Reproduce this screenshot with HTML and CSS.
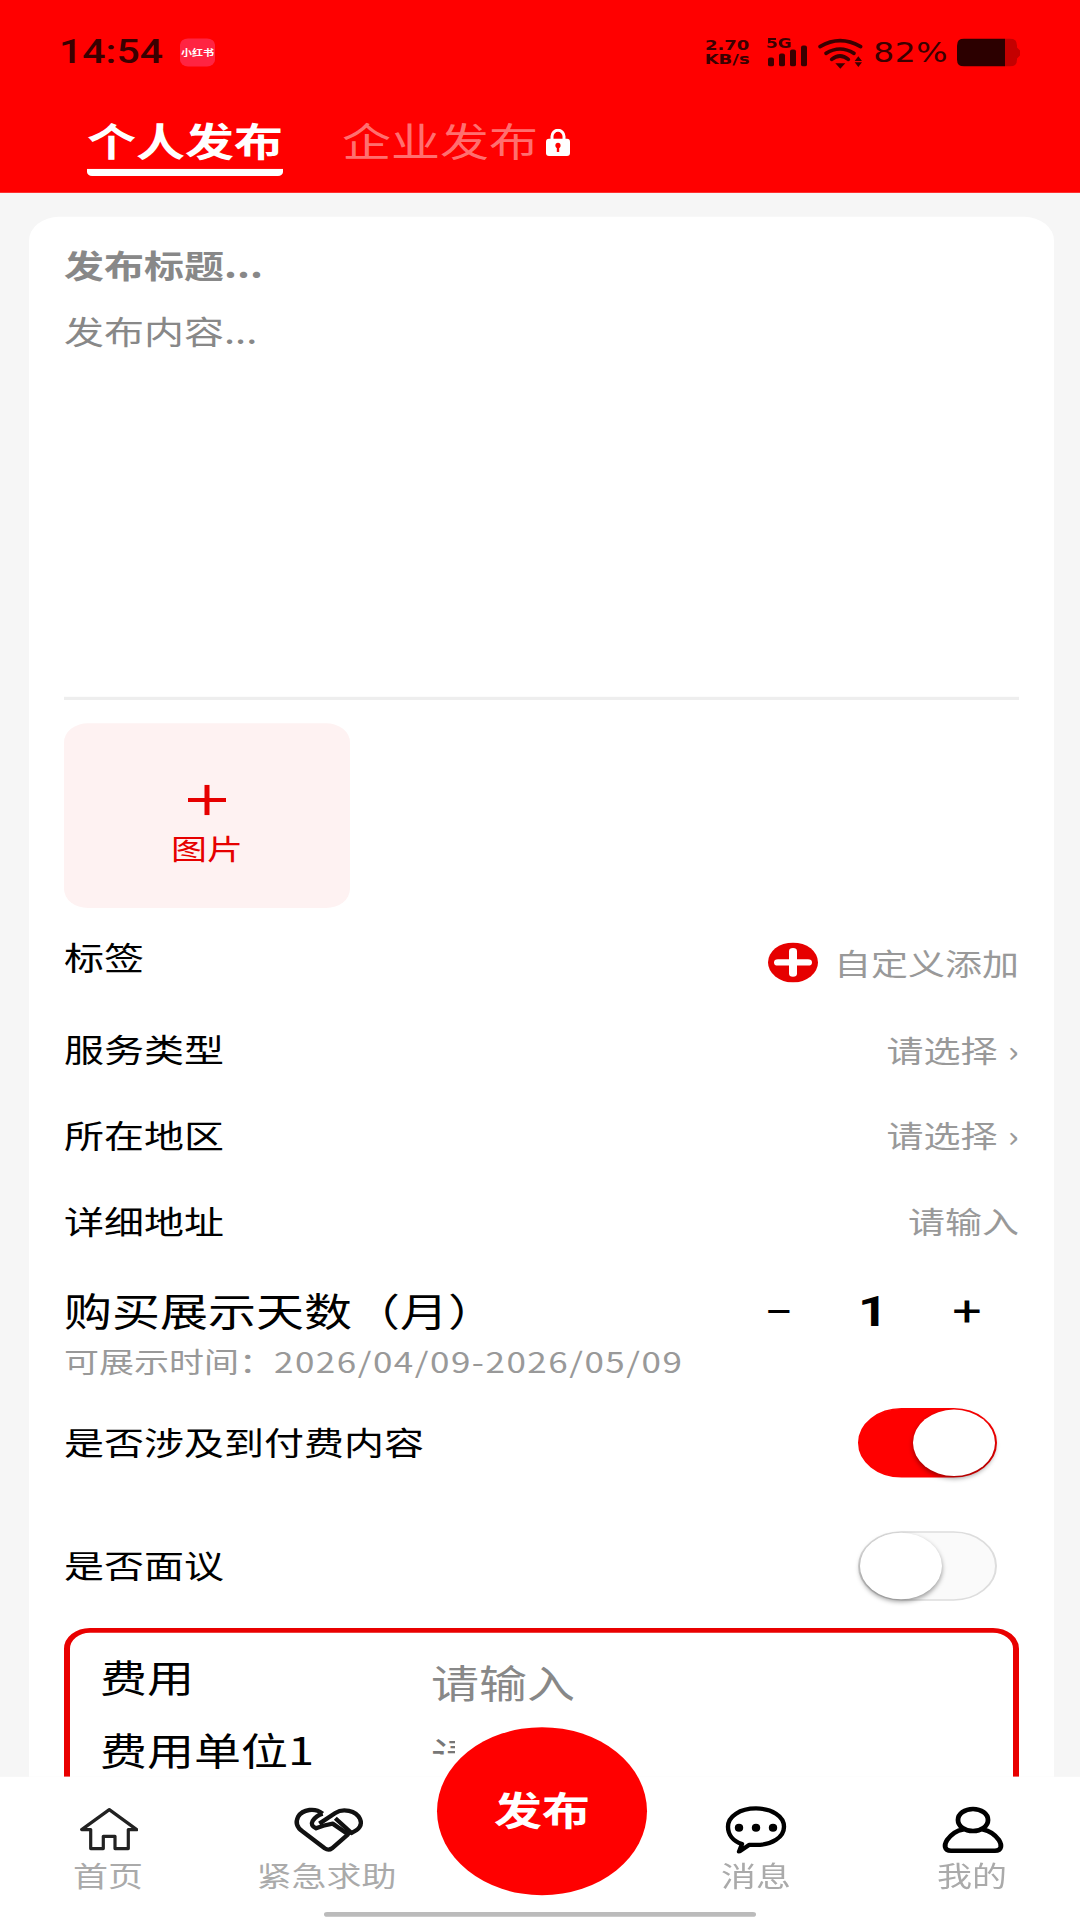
FILE: index.html
```html
<!doctype html>
<html lang="zh-CN">
    <head>
        <meta charset="UTF-8">
        <meta name="viewport" content="width=device-width, initial-scale=1.0">
        <title>发布</title>
        <link rel="stylesheet" href="styles.css">
    </head>
    <body>
        <div class="phone">
            <header class="top">
                <div class="status">
                    <div class="status-left">
                        <span class="clock">14:54</span>
                        <span class="app-badge">小红书</span>
                    </div>
                    <div class="status-right">
                        <div class="speed"><span>2.70</span><span>KB/s</span></div>
                        <div class="signal">
                            <span class="net">5G</span>
                            <svg class="signal-bars" viewBox="0 0 44 28" preserveAspectRatio="none">
                                <rect x="2" y="19" width="6" height="9" rx="2"/>
                                <rect x="13" y="15" width="6" height="13" rx="2"/>
                                <rect x="24" y="11" width="6" height="17" rx="2"/>
                                <rect x="35" y="7" width="6" height="21" rx="2"/>
                            </svg>
                        </div>
                        <svg class="wifi" viewBox="0 0 180 120" preserveAspectRatio="none">
                            <path d="M30 44Q90 8 152 44M48 64Q90 38 132 64M65 82Q90 62 115 82" fill="none" stroke="#3a0000" stroke-width="11" stroke-linecap="round"/>
                            <path d="M76 94H106L91 110ZM145 73L156 87H134ZM134 91H156L145 105Z" fill="#3a0000"/>
                        </svg>
                        <span class="percent">82%</span>
                        <svg class="battery" viewBox="0 0 63 28" preserveAspectRatio="none">
                            <path d="M48 0H53Q60 0 60 7V21Q60 28 53 28H48ZM60 9L63 12V17L60 20Z" fill="#c40000"/>
                            <path d="M7 0H48V28H7Q0 28 0 21V7Q0 0 7 0Z" fill="#2c0000"/>
                        </svg>
                    </div>
                </div>
                <nav class="tabs">
                    <a class="tab active">个人发布</a>
                    <a class="tab">企业发布
                        <svg class="lock" viewBox="0 0 24 27" preserveAspectRatio="none">
                            <path d="M6 11V7.5a6 6 0 0 1 12 0V11" fill="none" stroke="#fff" stroke-width="3"/>
                            <rect y="10" width="24" height="17" rx="3" fill="#fff"/>
                            <circle cx="12" cy="16.5" r="2.6" fill="#f00"/>
                            <rect x="10.8" y="17" width="2.4" height="6" fill="#f00"/>
                        </svg>
                    </a>
                </nav>
            </header>

            <main class="content">
                <section class="card">
                    <div class="post-title">发布标题...</div>
                    <div class="post-text">发布内容...</div>
                    <div class="pic-add">
                        <svg class="pic-plus" viewBox="0 0 38 38">
                            <path d="M19 0V38M0 19H38" stroke="#e60000" stroke-width="5"/>
                        </svg>
                        <span>图片</span>
                    </div>

                    <div class="row-tag">
                        <span class="label">标签</span>
                        <div class="tag-add">
                            <svg class="tag-plus" viewBox="0 0 50 50">
                                <circle cx="25" cy="25" r="25" fill="#e60000"/>
                                <path d="M25 11V39M10 25H40" stroke="#fff" stroke-width="8" stroke-linecap="round"/>
                            </svg>
                            <span class="value">自定义添加</span>
                        </div>
                    </div>
                    <div class="row">
                        <span class="label">服务类型</span>
                        <span class="value">请选择 <i class="chev">›</i></span>
                    </div>
                    <div class="row">
                        <span class="label">所在地区</span>
                        <span class="value">请选择 <i class="chev">›</i></span>
                    </div>
                    <div class="row">
                        <span class="label">详细地址</span>
                        <span class="value">请输入</span>
                    </div>

                    <div class="duration">
                        <span class="duration-label">购买展示天数（月）</span>
                        <div class="stepper">
                            <span class="step">−</span>
                            <span class="step count">1</span>
                            <span class="step">+</span>
                        </div>
                    </div>
                    <div class="duration-sub">可展示时间：<span class="dates">2026/04/09-2026/05/09</span></div>

                    <div class="row-switch first">
                        <span class="label">是否涉及到付费内容</span>
                        <div class="switch on"><span class="knob"></span></div>
                    </div>
                    <div class="row-switch second">
                        <span class="label">是否面议</span>
                        <div class="switch"><span class="knob"></span></div>
                    </div>

                    <div class="fee-box">
                        <div class="fee-row">
                            <span class="fee-label">费用</span>
                            <span class="fee-value">请输入</span>
                        </div>
                        <div class="fee-row next">
                            <span class="fee-label">费用单位1</span>
                            <span class="fee-cut">请选择</span>
                        </div>
                    </div>
                </section>
            </main>

            <footer class="bottom-nav">
                <a class="nav-item">
                    <svg class="nav-icon" viewBox="0 0 60 48" preserveAspectRatio="none">
                        <path d="M31.3 4L3.7 24H12.7V43H25.3V30.7H37V43H50.3V24H58.7Z" fill="none" stroke="#222" stroke-width="3.2" stroke-linejoin="round"/>
                    </svg>
                    <span>首页</span>
                </a>
                <a class="nav-item help">
                    <svg class="nav-icon wide" viewBox="0 0 270 144" preserveAspectRatio="none">
                        <path d="M122 24C100 6 62 10 48 34C38 54 48 68 62 78L128 128Q140 136 150 128L198 86L152 54Q126 58 102 68Q84 60 92 46Q102 30 122 24" fill="none" stroke="#111" stroke-width="13" stroke-linejoin="round"/>
                        <path d="M112 54L160 22C182 8 222 14 234 40C242 58 232 72 208 82L160 38" fill="none" stroke="#111" stroke-width="13" stroke-linejoin="round"/>
                    </svg>
                    <span>紧急求助</span>
                </a>
                <span class="nav-gap"></span>
                <a class="nav-item">
                    <svg class="nav-icon chat" viewBox="0 0 70 50" preserveAspectRatio="none">
                        <path d="M21 40C12 37 7 30 7 22C7 11 19 3 35 3S63 11 63 22S51 41 35 41C32 41 30 41 28 41L18 48Z" fill="none" stroke="#000" stroke-width="4.4" stroke-linejoin="round"/>
                        <circle cx="18" cy="23" r="4.2"/>
                        <circle cx="35" cy="23" r="4.2"/>
                        <circle cx="52" cy="23" r="4.2"/>
                    </svg>
                    <span>消息</span>
                </a>
                <a class="nav-item">
                    <svg class="nav-icon chat" viewBox="0 0 70 50" preserveAspectRatio="none">
                        <ellipse cx="36" cy="15" rx="15" ry="11.5" fill="none" stroke="#000" stroke-width="4.8"/>
                        <path d="M14 47H58C65 47 65 41 62 36C57 29 51 26 46 25M26 25C20 26 15 29 10 36C7 41 7 47 14 47" fill="none" stroke="#000" stroke-width="4.8" stroke-linecap="round"/>
                    </svg>
                    <span>我的</span>
                </a>
            </footer>

            <a class="fab">发布</a>
            <div class="home-bar"></div>
        </div>
    </body>
</html>
```
FILE: styles.css
```css
html, body {
    margin: 0;
    height: 1920px;
    overflow: hidden;
    background: #f6f6f6;
}
/* the shot is a 1080x2400 screen squeezed into 1920 high */
.phone {
    position: relative;
    width: 1080px;
    height: 2400px;
    margin-bottom: -480px;
    display: flex;
    flex-direction: column;
    overflow: hidden;
    transform: scaleY(0.8);
    transform-origin: 0 0;
    font-family: "Noto Sans CJK SC", "Noto Sans", sans-serif;
    color: #000;
}

/* header */
.top {
    height: 241px;
    flex: none;
    background: #f00;
}
.status {
    height: 130px;
    box-sizing: border-box;
    padding: 0 60px 0 59px;
    display: flex;
    align-items: center;
    justify-content: space-between;
    color: #3a0000;
}
.status-left {
    display: flex;
    align-items: center;
}
.clock {
    font-family: Roboto, sans-serif;
    font-size: 41px;
    font-weight: 500;
    width: 121px;
}
.app-badge {
    width: 35px;
    height: 35px;
    border-radius: 8px;
    background: #ff2442;
    color: #fff;
    font-size: 11px;
    font-weight: 700;
    line-height: 35px;
    text-align: center;
    white-space: nowrap;
    overflow: hidden;
}
.status-right {
    display: flex;
    align-items: center;
}
.speed {
    width: 46px;
    display: flex;
    flex-direction: column;
    align-items: center;
    font-family: "DejaVu Sans", sans-serif;
    font-size: 18px;
    font-weight: 700;
    line-height: 17px;
}
.signal {
    position: relative;
    width: 44px;
    height: 35px;
    margin-left: 16px;
}
.net {
    position: absolute;
    left: 0;
    top: -3px;
    font-family: "DejaVu Sans", sans-serif;
    font-size: 17px;
    font-weight: 700;
    line-height: 18px;
}
.signal-bars {
    display: block;
    width: 44px;
    height: 35px;
    fill: #3a0000;
}
.wifi {
    width: 60px;
    height: 50px;
}
.percent {
    margin-left: 3px;
    font-family: "DejaVu Sans", sans-serif;
    font-size: 33px;
    letter-spacing: 0.5px;
}
.battery {
    width: 63px;
    height: 35px;
    margin-left: 9px;
}
.tabs {
    display: flex;
    align-items: flex-start;
    gap: 59px;
    padding-left: 87px;
}
.tab {
    padding-top: 14px;
    font-size: 49px;
    line-height: 60px;
    color: rgba(255, 255, 255, 0.45);
    display: flex;
    align-items: center;
}
.tab.active {
    padding-bottom: 7px;
    color: #fff;
    font-weight: 700;
    border-bottom: 9px solid #fff;
    border-radius: 0 0 5px 5px;
}
.lock {
    width: 24px;
    height: 34px;
    margin-left: 8px;
    margin-top: 8px;
}

/* form card */
.content {
    height: 1980px;
    flex: none;
    overflow: hidden;
}
.card {
    margin: 30px 26px 0 29px;
    padding: 33px 35px 60px;
    background: #fff;
    border-radius: 30px;
}
.post-title {
    font-size: 40px;
    font-weight: 700;
    line-height: 54px;
    color: #888;
}
.post-text {
    margin-top: 28px;
    height: 485px;
    font-size: 40px;
    line-height: 54px;
    color: #888;
    border-bottom: 4px solid #eee;
}
.pic-add {
    margin-top: 29px;
    width: 286px;
    height: 231px;
    border-radius: 24px;
    background: #fef2f2;
    display: flex;
    flex-direction: column;
    align-items: center;
    color: #e60000;
    font-size: 36px;
    line-height: 44px;
}
.pic-plus {
    width: 38px;
    height: 38px;
    margin: 77px 0 18px;
}
.label {
    font-size: 40px;
    line-height: 54px;
}
.value {
    font-size: 37px;
    line-height: 50px;
    color: #999;
}
.chev {
    font-style: normal;
    margin-left: 2px;
}
.row-tag {
    height: 92px;
    padding-top: 33px;
    display: flex;
    justify-content: space-between;
}
.tag-add {
    display: flex;
    align-items: center;
    margin-top: 10px;
    height: 50px;
}
.tag-plus {
    width: 50px;
    height: 50px;
    margin-right: 16px;
}
.row {
    box-sizing: border-box;
    height: 107px;
    padding-bottom: 6px;
    display: flex;
    align-items: center;
    justify-content: space-between;
}
.duration {
    margin-top: 29px;
    display: flex;
    justify-content: space-between;
    align-items: center;
    height: 60px;
}
.duration-label {
    font-size: 48px;
    line-height: 54px;
    margin-bottom: 6px;
}
.stepper {
    display: grid;
    grid-template-columns: repeat(3, 94px);
    margin-right: 5px;
}
.step {
    font-family: Roboto, sans-serif;
    font-size: 52px;
    line-height: 60px;
    text-align: center;
}
.count {
    font-weight: 700;
}
.duration-sub {
    margin-top: 8px;
    font-size: 35px;
    line-height: 46px;
    color: #999;
    white-space: nowrap;
}
.dates {
    letter-spacing: 1.5px;
}
.row-switch {
    display: flex;
    justify-content: space-between;
    align-items: center;
    height: 87px;
}
.row-switch .label {
    margin-bottom: 4px;
}
.row-switch.first {
    margin-top: 36px;
}
.row-switch.second {
    margin-top: 67px;
}
.switch {
    box-sizing: border-box;
    width: 139px;
    height: 87px;
    margin-right: 22px;
    border: 2px solid #ddd;
    border-radius: 44px;
    background: #fafafa;
    display: flex;
}
.switch.on {
    border-color: #f00;
    background: #f00;
    justify-content: flex-end;
}
.knob {
    width: 82px;
    height: 83px;
    border-radius: 50%;
    background: #fff;
    box-shadow: 0 3px 6px rgba(0, 0, 0, 0.4);
}
.fee-box {
    margin-top: 34px;
    padding: 24px 0 60px 30px;
    border: 6px solid #e90000;
    border-radius: 26px;
}
.fee-row {
    display: flex;
    height: 60px;
}
.fee-row.next {
    margin-top: 31px;
}
.fee-label {
    width: 331px;
    font-size: 47px;
    line-height: 60px;
}
.fee-value {
    font-size: 48px;
    line-height: 72px;
    color: #888;
}
/* only the top of this value shows above the publish button */
.fee-cut {
    display: block;
    width: 24px;
    height: 24px;
    margin-top: 13px;
    overflow: hidden;
    font-size: 48px;
    line-height: 48px;
    color: #777;
    white-space: nowrap;
}

/* bottom bar */
.bottom-nav {
    flex: 1;
    background: #fff;
    display: grid;
    grid-template-columns: repeat(5, 1fr);
    padding-top: 36px;
}
.nav-item {
    display: flex;
    flex-direction: column;
    align-items: center;
    font-size: 35px;
    line-height: 44px;
    color: #aaa;
}
.nav-item.help {
    padding-left: 5px;
}
.nav-item span {
    margin-top: 5px;
}
.nav-icon {
    width: 60px;
    height: 60px;
    flex: none;
}
.nav-icon.wide {
    width: 90px;
}
.nav-icon.chat {
    width: 70px;
}
.fab {
    position: absolute;
    left: 437px;
    top: 2159px;
    width: 210px;
    height: 210px;
    border-radius: 50%;
    background: #f00;
    color: #fff;
    font-size: 48px;
    font-weight: 700;
    line-height: 202px;
    text-align: center;
}
.home-bar {
    position: absolute;
    left: 324px;
    top: 2390px;
    width: 432px;
    height: 6px;
    border-radius: 3px;
    background: #bbb;
}
```
